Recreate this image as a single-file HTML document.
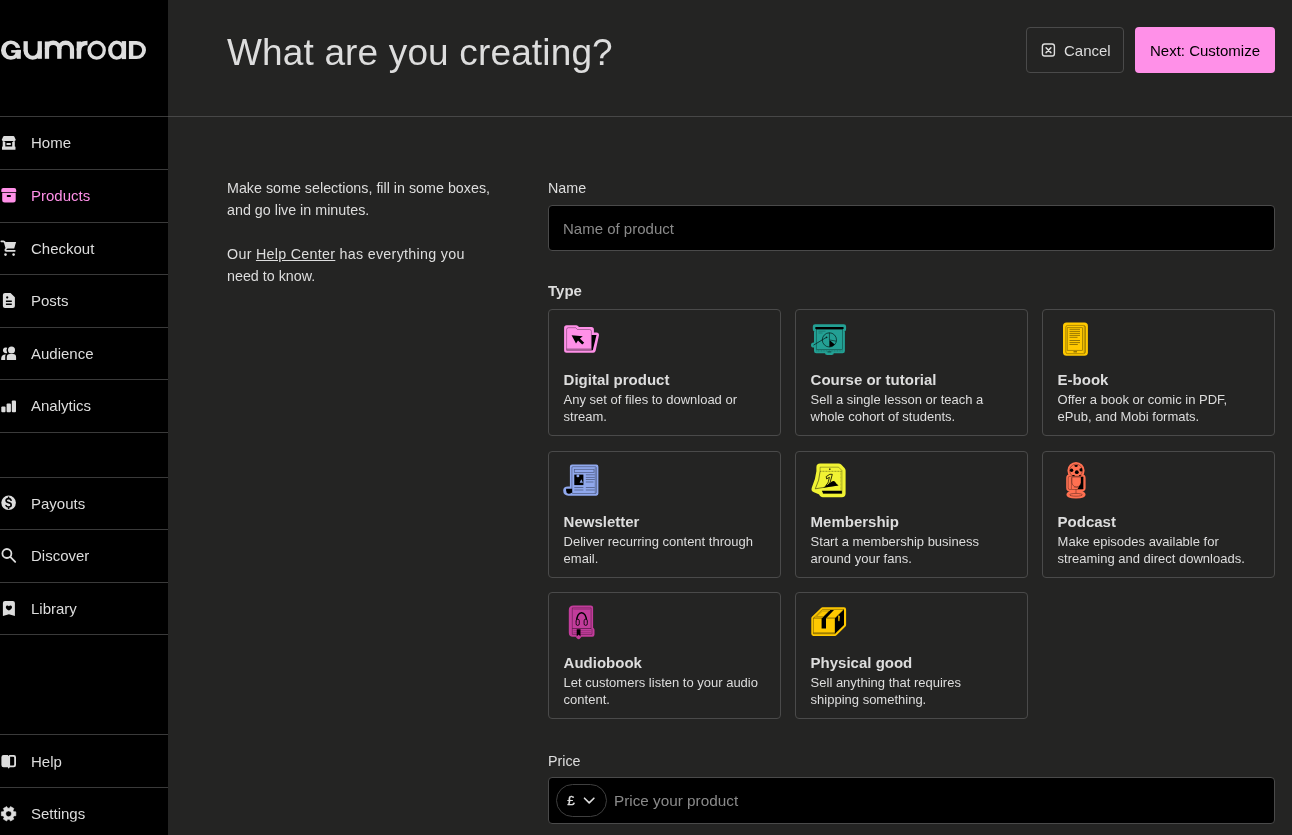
<!DOCTYPE html>
<html><head><meta charset="utf-8">
<style>
*{box-sizing:border-box;margin:0;padding:0}
body{-webkit-font-smoothing:antialiased}
.t,.nav span,.card,#side,.abs{will-change:transform}
html,body{width:1292px;height:835px;overflow:hidden;background:#242423;color:#dddddd;font-family:"Liberation Sans",sans-serif}
.abs{position:absolute}
#side{position:absolute;left:0;top:0;width:168px;height:835px;background:#000}
.hl{position:absolute;left:0;height:1px;background:#3a3a3a}
.nav{position:absolute;left:0;width:168px;display:flex;align-items:center;font-size:15px;color:#dddddd;white-space:nowrap}
.nav svg{position:absolute;left:1px}
.nav span{position:absolute;left:31px;top:50%;transform:translateY(-55%)}
.t{position:absolute;white-space:nowrap;line-height:1}
.card{position:absolute;width:233px;height:127px;border:1px solid #4a4a4a;border-radius:4px}
.card .ct{position:absolute;left:14.6px;top:61.2px;font-size:15px;font-weight:bold;white-space:nowrap;color:#dddddd}
.card .cd{position:absolute;left:14.6px;top:81px;font-size:13px;line-height:17px;color:#dddddd;white-space:nowrap}
.card svg{position:absolute}
</style></head><body>
<div id="side">
  <svg class="abs" style="left:0;top:0" width="150" height="70" viewBox="0 0 150 70"><g fill="#dddddd">
<path fill-rule="evenodd" d="M10.8 40.55a9.8 9.62 0 1 0 0 19.25a9.8 9.62 0 1 0 0-19.25zM11 44.1a5 5.98 0 1 1 0 11.95a5 5.98 0 1 1 0-11.95z"/>
<rect x="15.2" y="47.9" width="6" height="2.2" fill="#000"/>
<rect x="11.2" y="50.1" width="9.6" height="2.6"/>
<rect x="16.7" y="49.8" width="4.1" height="9"/>
<rect x="23.5" y="41.2" width="4.3" height="9.9"/>
<rect x="37.6" y="41.2" width="4.3" height="17.6"/>
<path d="M23.5 50.5A9.2 9.3 0 0 0 41.9 50.5H37.6A4.9 5.2 0 0 1 27.8 50.5Z"/>
<rect x="44.8" y="41.5" width="4.3" height="17.3"/>
<rect x="57.2" y="48.8" width="4.3" height="10"/>
<rect x="69.9" y="48.8" width="4.2" height="10"/>
<path d="M44.8 49A8.35 8.4 0 0 1 61.5 49H57.2A4.05 3.9 0 0 0 49.1 49Z"/>
<path d="M57.2 49A8.45 8.4 0 0 1 74.1 49H69.9A4.2 3.9 0 0 0 61.5 49Z"/>
<rect x="76.7" y="41.5" width="4.5" height="17.3"/>
<path d="M76.5 50.5C76.8 44 81 40.8 87.5 40.8V45.2C83.5 45.2 81.4 47 81.4 50.5Z"/>
<path fill-rule="evenodd" d="M96.65 40.6a9.25 9.6 0 1 0 0 19.2a9.25 9.6 0 1 0 0-19.2zM96.8 44a5.8 6.25 0 1 1 0 12.5a5.8 6.25 0 1 1 0-12.5z"/>
<path fill-rule="evenodd" d="M116.6 40.6a8.5 9.6 0 1 0 0 19.2a8.5 9.6 0 1 0 0-19.2zM116.95 44a4.75 6.25 0 1 1 0 12.5a4.75 6.25 0 1 1 0-12.5z"/>
<rect x="121.7" y="41.1" width="4.4" height="18"/>
<path fill-rule="evenodd" d="M128.9 41.1H136.5A9.5 9 0 0 1 136.5 59.1H128.9ZM133.3 44.7H136.5A5.6 5.55 0 0 1 136.5 55.8H133.3Z"/>
</g></svg>
  <svg class="abs" style="left:0;top:0" width="168" height="835" viewBox="0 0 168 835">
<g fill="#dddddd">
<!-- home store -->
<path d="M4.2 135.9H13.3Q14 135.9 14.4 136.7L15.6 139.6Q15.9 140.9 14.6 140.9H2.9Q1.6 140.9 1.9 139.6L3.1 136.7Q3.5 135.9 4.2 135.9Z"/>
<rect x="2.7" y="141.2" width="2.6" height="7"/>
<rect x="12.2" y="141.2" width="2.6" height="7"/>
<rect x="2" y="146.4" width="13.5" height="3.4" rx="0.6"/>
<rect x="6.5" y="143" width="4.3" height="1.9" rx="0.5"/>
<path d="M4.4 140.9A1.5 1.2 0 0 0 7.4 140.9Z M10.1 140.9A1.5 1.2 0 0 0 13.1 140.9Z" fill="#000"/>
<!-- checkout cart -->
<path d="M5 242H16.1L14.2 248.4H6.6Z"/>
<path d="M1.3 241.3H3.4Q4.4 241.3 4.8 242.4L6.5 248.5Q5.3 249.1 5.3 250Q5.3 250.8 6.1 250.8H14.8" fill="none" stroke="#dddddd" stroke-width="1.7" stroke-linecap="round" stroke-linejoin="round"/>
<circle cx="5.5" cy="254.6" r="1.3"/><circle cx="13.6" cy="254.6" r="1.3"/>
<!-- posts doc -->
<path fill-rule="evenodd" d="M5 292.9H10.5L14.9 297.3V305.9A2.1 2.1 0 0 1 12.8 308H5A2.1 2.1 0 0 1 2.9 305.9V295A2.1 2.1 0 0 1 5 292.9Z M7.2 296.3a1.1 1.1 0 1 0 0.01 0Z M5.9 300.5H11.8V301.9H5.9Z M5.9 303.5H11.8V304.9H5.9Z"/>
<!-- audience -->
<circle cx="11.5" cy="350" r="3.5"/>
<path d="M6.8 357.3A3.2 3.2 0 0 1 10 354.1H13A3.2 3.2 0 0 1 16.1 357.3V360.1H6.8Z"/>
<path d="M7.2 347.8A2.9 2.9 0 1 0 7.2 352.9A4.6 4.6 0 0 1 7.2 347.8Z"/>
<path d="M5.5 354.5A4.3 4.3 0 0 0 1.2 358.6V360.1H5.2V357.4A3.8 3.8 0 0 1 5.9 354.5Z"/>
<!-- analytics -->
<rect x="1.3" y="406.4" width="4.2" height="5.8" rx="1"/>
<rect x="6.6" y="403.5" width="4.3" height="8.7" rx="1"/>
<rect x="11.8" y="400.4" width="4.2" height="11.8" rx="1"/>
<!-- payouts -->
<circle cx="8.6" cy="502.8" r="7.3"/>
<path d="M11.1 500.2Q10.6 498.6 8.6 498.6Q6.1 498.6 6.1 500.5Q6.1 502.3 8.6 502.6Q11.2 503 11.2 505Q11.2 507 8.6 507Q6.6 507 6 505.5M8.6 497.2V498.6M8.6 507V508.4" fill="none" stroke="#000" stroke-width="1.6" stroke-linecap="round"/>
<!-- discover -->
<circle cx="6.9" cy="553.5" r="4.5" fill="none" stroke="#dddddd" stroke-width="1.8"/>
<path d="M10.3 556.9L15.2 561.8" stroke="#dddddd" stroke-width="1.8" stroke-linecap="round"/>
<!-- library -->
<path fill-rule="evenodd" d="M5 601H12.8A2.1 2.1 0 0 1 14.9 603.1V616.1L8.9 614.2L2.9 616.1V603.1A2.1 2.1 0 0 1 5 601Z M8.9 606.3C8.2 605 5.8 605.1 5.8 607.2C5.8 608.6 7.5 609.8 8.9 610.5C10.3 609.8 12 608.6 12 607.2C12 605.1 9.6 605 8.9 606.3Z"/>
<!-- help -->
<path fill-rule="evenodd" d="M3.6 755H8.6V767.2H3.6A2.2 2.2 0 0 1 1.4 765V757.2A2.2 2.2 0 0 1 3.6 755Z M8.6 755H13.8A2.2 2.2 0 0 1 16 757.2V765A2.2 2.2 0 0 1 13.8 767.2H9.8L8.6 768.8L7.8 767.2H8.6Z M10.1 756.8H13.2A1 1 0 0 1 14.2 757.8V764.4A1 1 0 0 1 13.2 765.4H10.1Z"/>
<path d="M7.4 754.6L8.6 755.9L9.8 754.6Z" fill="#000"/>
<!-- settings gear -->
<path fill-rule="evenodd" stroke="#dddddd" stroke-width="0.6" stroke-linejoin="round" d="M13.79 811.70 L15.84 811.86 L15.84 815.74 L13.79 815.90 L13.01 817.25 L13.90 819.10 L10.54 821.04 L9.38 819.35 L7.82 819.35 L6.66 821.04 L3.30 819.10 L4.19 817.25 L3.41 815.90 L1.36 815.74 L1.36 811.86 L3.41 811.70 L4.19 810.35 L3.30 808.50 L6.66 806.56 L7.82 808.25 L9.38 808.25 L10.54 806.56 L13.90 808.50 L13.01 810.35Z M8.60 810.90a2.9 2.9 0 1 0 0.01 0Z"/>
</g>
<!-- products archive pink -->
<g fill="#ff90e8">
<path d="M3.3 188H14.2A2 2 0 0 1 16.2 190V192H1.3V190A2 2 0 0 1 3.3 188Z"/>
<path fill-rule="evenodd" d="M2.2 192.8H15.7V199.9A2.5 2.5 0 0 1 13.2 202.4H4.7A2.5 2.5 0 0 1 2.2 199.9Z M7.6 195.1H10.1A0.9 0.9 0 0 1 10.1 196.9H7.6A0.9 0.9 0 0 1 7.6 195.1Z"/>
</g>
</svg>
  <div class="hl" style="top:116px;width:168px"></div>
  <div class="nav" style="top:117px;height:52px"><span>Home</span></div>
  <div class="hl" style="top:169px;width:168px"></div>
  <div class="nav" style="top:170px;height:52px;color:#ff90e8"><span>Products</span></div>
  <div class="hl" style="top:222px;width:168px"></div>
  <div class="nav" style="top:223px;height:51px"><span>Checkout</span></div>
  <div class="hl" style="top:274px;width:168px"></div>
  <div class="nav" style="top:275px;height:52px"><span>Posts</span></div>
  <div class="hl" style="top:327px;width:168px"></div>
  <div class="nav" style="top:328px;height:51px"><span>Audience</span></div>
  <div class="hl" style="top:379px;width:168px"></div>
  <div class="nav" style="top:380px;height:52px"><span>Analytics</span></div>
  <div class="hl" style="top:432px;width:168px"></div>
  <div class="hl" style="top:477px;width:168px"></div>
  <div class="nav" style="top:478px;height:51px"><span>Payouts</span></div>
  <div class="hl" style="top:529px;width:168px"></div>
  <div class="nav" style="top:530px;height:52px"><span>Discover</span></div>
  <div class="hl" style="top:582px;width:168px"></div>
  <div class="nav" style="top:583px;height:51px"><span>Library</span></div>
  <div class="hl" style="top:634px;width:168px"></div>
  <div class="hl" style="top:734px;width:168px"></div>
  <div class="nav" style="top:736px;height:52px"><span>Help</span></div>
  <div class="hl" style="top:787px;width:168px"></div>
  <div class="nav" style="top:788px;height:52px"><span>Settings</span></div>
</div>

<div class="hl" style="top:116px;left:168px;width:1124px;background:#474747"></div>
<div class="t" style="left:227px;top:33.5px;font-size:37px;letter-spacing:0.15px">What are you creating?</div>

<div class="abs" style="left:1026px;top:27px;width:98px;height:46px;border:1px solid #4a4a4a;border-radius:4px"></div>
<div class="t" style="left:1064px;top:43px;font-size:15px">Cancel</div>
<div class="abs" style="left:1135px;top:27px;width:140px;height:46px;background:#ff90e8;border-radius:4px"></div>
<div class="t" style="left:1150.3px;top:43px;font-size:15px;color:#000">Next: Customize</div>

<div class="abs" style="left:227px;top:177px;width:320px;white-space:nowrap;font-size:14.3px;line-height:22px">Make some selections, fill in some boxes,<br>and go live in minutes.<br><br><span style="letter-spacing:0.28px">Our <u>Help Center</u> has everything you</span><br>need to know.</div>

<div class="t" style="left:548px;top:181px;font-size:14.3px">Name</div>
<div class="abs" style="left:548px;top:205px;width:727px;height:46px;background:#000;border:1px solid #4a4a4a;border-radius:4px"></div>
<div class="t" style="left:563px;top:221px;font-size:15px;color:#8a8a8a">Name of product</div>

<div class="t" style="left:548px;top:283.3px;font-size:15px;font-weight:bold">Type</div>

<div class="card" style="left:548px;top:309px"><div class="ct">Digital product</div><div class="cd">Any set of files to download or<br>stream.</div></div>
<div class="card" style="left:795px;top:309px"><div class="ct">Course or tutorial</div><div class="cd">Sell a single lesson or teach a<br>whole cohort of students.</div></div>
<div class="card" style="left:1042px;top:309px"><div class="ct">E-book</div><div class="cd">Offer a book or comic in PDF,<br>ePub, and Mobi formats.</div></div>
<div class="card" style="left:548px;top:451px"><div class="ct">Newsletter</div><div class="cd">Deliver recurring content through<br>email.</div></div>
<div class="card" style="left:795px;top:451px"><div class="ct">Membership</div><div class="cd">Start a membership business<br>around your fans.</div></div>
<div class="card" style="left:1042px;top:451px"><div class="ct">Podcast</div><div class="cd">Make episodes available for<br>streaming and direct downloads.</div></div>
<div class="card" style="left:548px;top:592px"><div class="ct">Audiobook</div><div class="cd">Let customers listen to your audio<br>content.</div></div>
<div class="card" style="left:795px;top:592px"><div class="ct">Physical good</div><div class="cd">Sell anything that requires<br>shipping something.</div></div>

<div class="t" style="left:548px;top:754px;font-size:14.3px">Price</div>
<div class="abs" style="left:548px;top:777px;width:727px;height:47px;background:#000;border:1px solid #4a4a4a;border-radius:4px"></div>
<div class="abs" style="left:556px;top:784px;width:51px;height:33px;border:1px solid #3f3f3f;border-radius:17px"></div>
<div class="t" style="left:614px;top:793px;font-size:15.3px;color:#8a8a8a">Price your product</div>
<svg class="abs" style="left:0;top:0" width="1292" height="835" viewBox="0 0 1292 835">
<!-- cancel icon -->
<rect x="1042.4" y="44" width="12" height="12" rx="2.3" fill="none" stroke="#dddddd" stroke-width="1.4"/>
<path d="M1046.1 47.8L1050.9 52.6M1050.9 47.8L1046.1 52.6" stroke="#dddddd" stroke-width="1.5" stroke-linecap="round"/>
<!-- price pill: pound + chevron -->
<text x="567.3" y="805.3" font-family="Liberation Sans" font-size="13.5" fill="#dddddd" stroke="#dddddd" stroke-width="0.3">£</text>
<path d="M584.5 798.2L589.2 802.9L593.9 798.2" fill="none" stroke="#dddddd" stroke-width="1.6" stroke-linecap="round" stroke-linejoin="round"/>

<!-- DIGITAL PRODUCT folder (pink) -->
<g>
<path d="M566.6 327.7H576.2L578 329.5H591.4V334.9H596.5L593.2 350.3H566.6Z" fill="#ff90e8" stroke="#ff90e8" stroke-width="5" stroke-linejoin="round"/>
<path d="M591.4 334.9H596.5L592.8 350.3H591.4Z" fill="#000"/>
<path d="M566.6 350.3V329.5Q566.6 327.7 568.4 327.7H575.7L577.4 329.5H589.6Q591.4 329.5 591.4 331.3V350.3Z" fill="#ff90e8" stroke="#000" stroke-opacity="0.45" stroke-width="0.7" fill="none"/>
<rect x="566.6" y="348.4" width="24.8" height="2" fill="#000" fill-opacity="0.3"/>
<path d="M571.6 335.2L582.8 336.3L579.9 338.6L584.2 342.7L582.2 344.6L578 340.6L576 343.6Z" fill="#000"/>
</g>

<!-- COURSE presentation (teal) -->
<g>
<path d="M815.1 326.6H843.8V329.2H842.6V350.9H831.6V352.7H827.2V350.9H816.3V329.2H815.1Z" fill="#23a094" stroke="#23a094" stroke-width="4.6" stroke-linejoin="round"/>
<circle cx="813.6" cy="345" r="2.6" fill="#23a094"/>
<rect x="816.3" y="329.1" width="26.3" height="20.3" fill="#23a094" stroke="#000" stroke-opacity="0.45" stroke-width="0.7" fill="none"/>
<path d="M816.3 350.9H842.6" stroke="#000" stroke-opacity="0.4" stroke-width="0.8" stroke-dasharray="1 0.6"/>
<path d="M827.5 351.2H831.3V352.6H827.5Z" fill="#000" fill-opacity="0.4"/>
<rect x="815.1" y="326.9" width="28.7" height="2.3" rx="1.1" fill="#000"/>
<circle cx="829.4" cy="339.9" r="7.1" fill="#23a094" stroke="#000" stroke-opacity="0.65" stroke-width="0.9"/>
<path d="M829.4 332.8V339.9L836.3 341.2" fill="none" stroke="#000" stroke-opacity="0.65" stroke-width="0.8"/>
<path d="M829.4 339.9V347A7.1 7.1 0 0 0 834.8 344.6Z" fill="#000"/>
<path d="M813.4 345.2L826.6 337.3" stroke="#000" stroke-opacity="0.75" stroke-width="0.8"/>
<circle cx="826.6" cy="337.3" r="0.9" fill="#000" fill-opacity="0.7"/>
<path d="M818.5 331.2H825.5M818.5 333H822.5" stroke="#000" stroke-opacity="0.35" stroke-width="0.6"/>
</g>

<!-- E-BOOK (yellow) -->
<g>
<rect x="1063" y="322.6" width="24.9" height="33.2" rx="3.5" fill="#ffc900"/>
<rect x="1065.8" y="325.4" width="19.6" height="28.3" rx="1.8" fill="#ffc900" stroke="#000" stroke-opacity="0.45" stroke-width="0.7" fill="none"/>
<rect x="1083.6" y="326" width="1.6" height="27" fill="#000" fill-opacity="0.2"/>
<rect x="1067.2" y="327.7" width="15.2" height="22.6" fill="#ffc900" stroke="#000" stroke-opacity="0.45" stroke-width="0.7" fill="none"/>
<path d="M1069.5 329.3H1080M1069.5 331.4H1080M1069.5 333.4H1080M1069.5 335.4H1080M1069.5 337.3H1077.5M1069.5 340.5H1080M1069.5 342.6H1080M1069.5 344.5H1077.8" stroke="#000" stroke-opacity="0.5" stroke-width="0.8"/>
<rect x="1073.5" y="351" width="3.5" height="1.5" fill="#000" fill-opacity="0.4"/>
</g>

<!-- NEWSLETTER (lavender) -->
<g>
<path d="M572 466.7H596.3V493.6H568.5Q565.3 493.6 565.3 490.6Q565.3 488.6 568 488.6H572Z" fill="#90a8ed" stroke="#90a8ed" stroke-width="4.2" stroke-linejoin="round"/>
<rect x="571.9" y="466.7" width="24.4" height="26.8" rx="1" fill="#90a8ed" stroke="#000" stroke-opacity="0.45" stroke-width="0.7" fill="none"/>
<rect x="594.6" y="467.5" width="1.6" height="25.8" fill="#000" fill-opacity="0.18"/>
<rect x="574.3" y="469.3" width="19.7" height="3.3" fill="#90a8ed" stroke="#000" stroke-opacity="0.45" stroke-width="0.7" fill="none"/>
<rect x="574.3" y="474.6" width="9.1" height="10.5" fill="#000"/>
<circle cx="577.9" cy="475.9" r="1.45" fill="#90a8ed"/>
<path d="M581.3 479.2L583 482.7H579.6Z" fill="#90a8ed"/>
<path d="M585.8 474.8H594.7M585.8 477.4H594.7M585.8 479.5H594.7M585.8 482H593.5M574.3 487.5H583.4M574.3 490H583.4M585.8 487.5H594.7M585.8 490H594.7" stroke="#000" stroke-opacity="0.45" stroke-width="0.8"/>
<path d="M566.1 488.7H572.1V492.6Q570 494 568.5 493.8Q566.1 493.4 566.1 490.5Z" fill="#000"/>
</g>

<!-- MEMBERSHIP calendar (bright yellow) -->
<g>
<path d="M820.1 467.2H838.6L841.9 470.5V493.5H822.8L821.3 491.2L815.3 488.8Q819.2 480 820.1 471.3Z" fill="#f1f333" stroke="#f1f333" stroke-width="7.4" stroke-linejoin="round"/>
<path d="M820.1 471.3V467.2H838.6L841.9 470.5V493.5H822.8" fill="none" stroke="#000" stroke-opacity="0.45" stroke-width="0.7" fill="none"/>
<path d="M820.1 471.3H841.5" stroke="#000" stroke-opacity="0.5" stroke-width="0.8" stroke-dasharray="1 0.5"/>
<circle cx="829.8" cy="469.2" r="0.85" fill="#000" fill-opacity="0.7"/>
<path d="M840.6 471.5V491" stroke="#000" stroke-opacity="0.35" stroke-width="0.6" stroke-dasharray="0.8 0.6"/>
<path d="M821.8 490.8H841.9V493.5H823.2Z" fill="#000"/>
<path d="M823 487.8Q828.5 484.5 831.5 481.8Q833.8 480 835.2 482Q836.5 484 838.6 485.6Z" fill="#000"/>
<path d="M820.1 471.3Q819.5 480.5 815.3 488.8L837.6 485.1" fill="none" stroke="#000" stroke-opacity="0.6" stroke-width="0.8"/>
<path d="M826.2 476.6L829.8 474.3H832.3L830.2 482.2Q829.3 485.2 825.8 486L826.7 484.2Q828.2 483.5 828.4 481.5L829.4 477.3L826.6 478.9Z" fill="none" stroke="#000" stroke-opacity="0.8" stroke-width="1"/>
</g>

<!-- PODCAST mic (orange) -->
<g>
<circle cx="1076" cy="470.6" r="6.6" fill="#ff7051" stroke="#ff7051" stroke-width="4"/>
<path d="M1070 476.3H1081.8A1.8 1.8 0 0 1 1083.6 478.1V487.7A1.8 1.8 0 0 1 1081.8 489.5H1077V492.6Q1083.6 493.1 1083.6 494.8Q1083.6 496.5 1076 496.5Q1068.4 496.5 1068.4 494.8Q1068.4 493.1 1075 492.6V489.5H1070A1.8 1.8 0 0 1 1068.2 487.7V478.1A1.8 1.8 0 0 1 1070 476.3Z" fill="#ff7051" stroke="#ff7051" stroke-width="4" stroke-linejoin="round"/>
<circle cx="1076" cy="470.6" r="6.4" fill="#ff7051" stroke="#000" stroke-opacity="0.45" stroke-width="0.7"/>
<circle cx="1076.8" cy="472.2" r="1.9" fill="#000"/>
<path d="M1074.3 465.3A1.8 1.8 0 0 0 1077.9 465.3A6.4 6.4 0 0 0 1074.3 465.3Z" fill="#000"/>
<circle cx="1071.6" cy="470.2" r="1.7" fill="#000"/>
<path d="M1080.8 468.2A1.5 1.5 0 0 0 1081.3 471.4L1082.3 471.2A6.4 6.4 0 0 0 1081.8 467.9Z" fill="#000"/>
<path d="M1071.8 475.8A1.7 1.4 0 0 1 1075 476.2Z M1078.6 476.2A1.7 1.4 0 0 1 1081.6 475.6Z" fill="#000"/>
<rect x="1068.2" y="476.3" width="15.4" height="13.2" rx="1.6" fill="#ff7051" stroke="#000" stroke-opacity="0.45" stroke-width="0.7" fill="none"/>
<path d="M1079.6 477H1083.1V488.9H1077.5Q1080.4 486.5 1079.6 477Z" fill="#000"/>
<path d="M1071.4 477.6V489" stroke="#000" stroke-opacity="0.45" stroke-width="0.7"/>
<path d="M1071.9 477H1081V482.2A4.55 4.8 0 0 1 1071.9 482.2Z" fill="#ff7051" stroke="#000" stroke-opacity="0.5" stroke-width="0.7"/>
<path d="M1073.8 487.2H1079" stroke="#000" stroke-opacity="0.4" stroke-width="0.6"/>
<path d="M1076 489.5V493.3" stroke="#000" stroke-opacity="0.5" stroke-width="0.7"/>
<ellipse cx="1076" cy="494.8" rx="6.4" ry="1.4" fill="none" stroke="#000" stroke-opacity="0.5" stroke-width="0.7"/>
</g>

<!-- AUDIOBOOK (magenta) -->
<g>
<path d="M573.5 607.6H590.9V628.5L592.3 630V634.6H580.5L578.6 636.8L576.8 634.6H572.8Q571 634.6 571 632.8V610Q571 607.6 573.5 607.6Z" fill="#c23c9b" stroke="#c23c9b" stroke-width="4.4" stroke-linejoin="round"/>
<path d="M572.3 607.9H591.1V628.5H572.3Z" fill="#c23c9b" stroke="#000" stroke-opacity="0.45" stroke-width="0.7" fill="none"/>
<path d="M573.3 609.3H590" stroke="#000" stroke-opacity="0.3" stroke-width="0.6"/>
<path d="M572.3 628.5H591.1L592 629.5V634.4H572.3Z" fill="#c23c9b" stroke="#000" stroke-opacity="0.45" stroke-width="0.7" fill="none"/>
<path d="M573.5 630.6H590.8M573.5 632.6H590.8" stroke="#000" stroke-opacity="0.3" stroke-width="0.6"/>
<path d="M576.7 629.2H580.5V636.4L578.6 634.6L576.7 636.4Z" fill="#000"/>
<path d="M576.6 622C576.1 609.6 587 609.6 586.6 622" fill="none" stroke="#000" stroke-width="1.4"/>
<rect x="576.1" y="619.2" width="3.2" height="6.2" rx="1.6" fill="#c23c9b" stroke="#000" stroke-opacity="0.85" stroke-width="1"/>
<rect x="584.1" y="619.2" width="3.2" height="6.2" rx="1.6" fill="#c23c9b" stroke="#000" stroke-opacity="0.85" stroke-width="1"/>
</g>

<!-- PHYSICAL GOOD box (yellow) -->
<g>
<path d="M813.4 618.2L822.5 609.4H844V625L835 633.8H813.4Z" fill="#ffc900" stroke="#ffc900" stroke-width="4.2" stroke-linejoin="round"/>
<path d="M813.4 618.2L822.5 609.4H844L835 618.2Z" fill="#ffc900" stroke="#000" stroke-opacity="0.45" stroke-width="0.7" fill="none"/>
<path d="M813.4 618.2H835V633.8H813.4Z" fill="#ffc900" stroke="#000" stroke-opacity="0.45" stroke-width="0.7" fill="none"/>
<path d="M835 618.2L844 609.4V625L835 633.8Z" fill="#000"/>
<path d="M838.2 615.5Q839.5 615 839.8 616.5L839.4 621Q838.5 621.6 838.3 620.5Z" fill="#ffc900"/>
<path d="M822 618.2L830.3 610H834L826 618.2V628.6H821.6V618.2Z" fill="#000"/>
<path d="M816.5 616.5L822.5 611H829L823.5 616.5Z" fill="none" stroke="#000" stroke-opacity="0.35" stroke-width="0.7"/>
<rect x="813.4" y="632" width="21.6" height="1.8" fill="#000" fill-opacity="0.25"/>
</g>
</svg>
</body></html>
